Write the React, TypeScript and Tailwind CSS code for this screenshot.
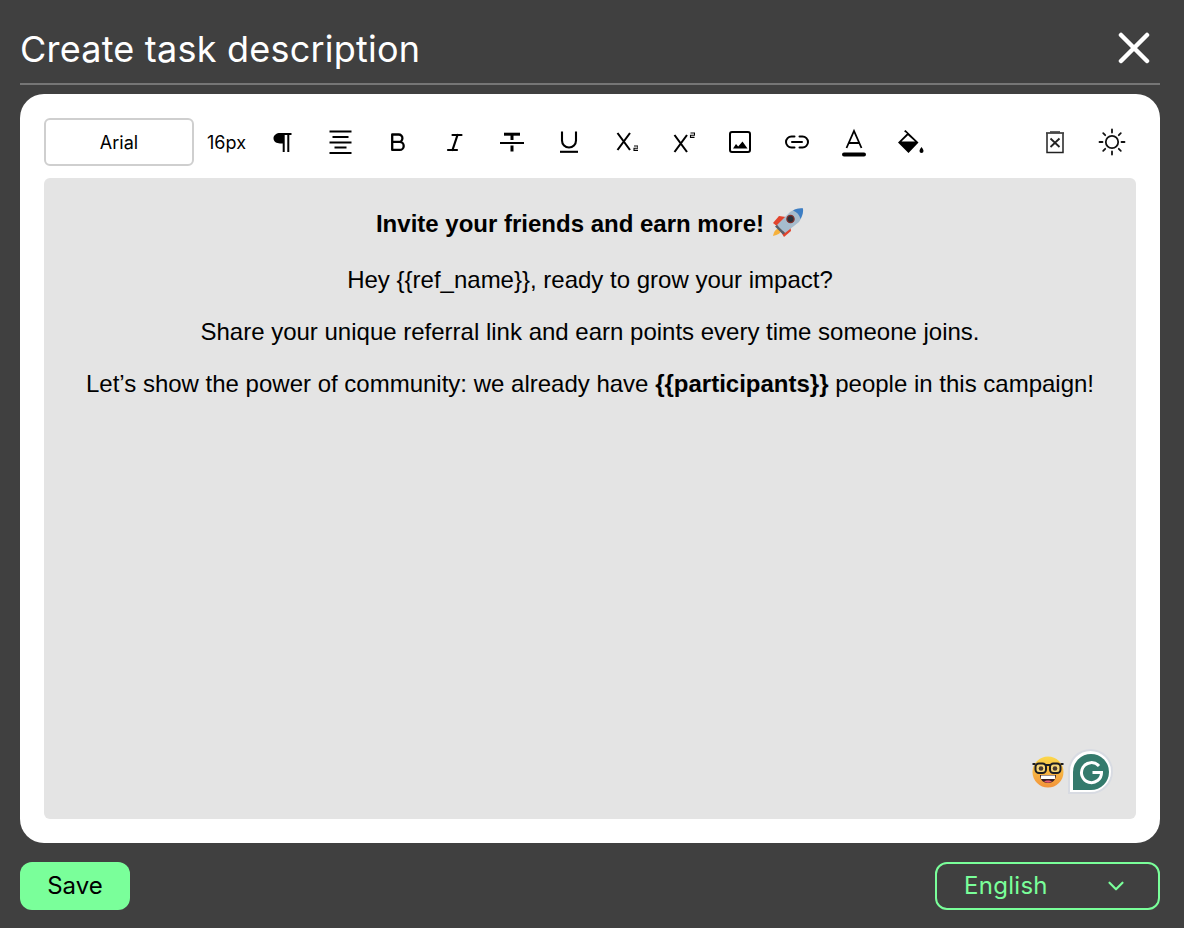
import { ChevronDown } from "lucide-react";

/* ── Toolbar icons ── */
const Cell = ({ children }: { children: React.ReactNode }) => (
  <div className="w-[57px] h-[48px] flex items-center justify-center shrink-0 text-black">{children}</div>
);

const IconPilcrow = () => (
  <svg width="24" height="24" viewBox="0 0 24 24" fill="currentColor">
    <path d="M8 13.500c-3.200 0-6.500-1.800-6.500-5.200C1.500 5 4.800 3 8 3h11.500v2h-2.200v17h-2V5h-2.600v17h-2V13.500z" />
  </svg>
);
const IconAlign = () => (
  <svg width="26" height="26" viewBox="0 0 26 26" fill="none" stroke="currentColor" strokeWidth="1.800">
    <path d="M1.500 2.500h22M4.500 8h16M1.500 13.500h22M6.500 18.500h12M1.500 24h22" />
  </svg>
);
const IconBold = () => (
  <svg width="24" height="24" viewBox="0 0 24 24" fill="none" stroke="currentColor" strokeWidth="2.300" strokeLinejoin="round">
    <path d="M6.200 4.500h6.500a3.700 3.700 0 0 1 0 7.400H6.200zM6.200 11.900h7.500a4 4 0 0 1 0 8H6.200z" />
  </svg>
);
const IconItalic = () => (
  <svg width="24" height="24" viewBox="0 0 24 24" fill="none" stroke="currentColor" strokeWidth="2.200" strokeLinecap="round">
    <path d="M9.500 5h9M5 20h9M14.500 5l-5 15" />
  </svg>
);
const IconStrike = () => (
  <svg width="26" height="26" viewBox="0 0 26 26" fill="none" stroke="currentColor">
    <path d="M5 5.200h16" strokeWidth="3" />
    <path d="M13 5v6" strokeWidth="3" />
    <path d="M1 14h24" strokeWidth="2" />
    <path d="M13 16.500v6" strokeWidth="3" />
  </svg>
);
const IconUnderline = () => (
  <svg width="24" height="24" viewBox="0 0 24 24" fill="none" stroke="currentColor" strokeWidth="2.100">
    <path d="M5 1.500v9a7 7 0 0 0 14 0v-9" />
    <path d="M3 21.800h18" />
  </svg>
);
const IconSub = () => (
  <svg width="24" height="24" viewBox="0 0 24 24" fill="none" stroke="currentColor">
    <path d="M3.500 3l12.500 17M16 3L3.500 20" strokeWidth="2.100" />
    <path d="M20 16h4v2.200h-4v2.200h4" strokeWidth="1.100" />
  </svg>
);
const IconSup = () => (
  <svg width="24" height="24" viewBox="0 0 24 24" fill="none" stroke="currentColor">
    <path d="M3.500 5l12.500 17M16 5L3.500 22" strokeWidth="2.100" />
    <path d="M19.500 3h4v2.200h-4v2.200h4" strokeWidth="1.100" />
  </svg>
);
const IconImage = () => (
  <svg width="24" height="24" viewBox="0 0 24 24" fill="none">
    <rect x="2" y="2" width="20" height="20" rx="2" stroke="currentColor" strokeWidth="2" />
    <path d="M5 18.500l3-4.500 2.200 2.500L14.500 11.500l5 7z" fill="currentColor" />
  </svg>
);
const IconLink = () => (
  <svg width="26" height="26" viewBox="0 0 26 26" fill="none" stroke="currentColor" strokeWidth="2" strokeLinecap="round">
    <path d="M10.500 7.500H7.500a5.500 5.500 0 0 0 0 11h3M15.500 7.500h3a5.500 5.500 0 0 1 0 11h-3M8 13h10" />
  </svg>
);
const IconTextColor = () => (
  <svg width="26" height="30" viewBox="0 0 26 30" fill="none">
    <path d="M5.500 21L13 4l7.500 17M7.800 16h10.400" stroke="currentColor" strokeWidth="1.800" />
    <rect x="1" y="25.500" width="24" height="4" rx="2" fill="currentColor" />
  </svg>
);
const IconFill = () => (
  <svg width="28" height="28" viewBox="0 0 28 28" fill="currentColor">
    <path d="M8.500 2L21.500 14.500 11.500 25 1 14.500 10 5.500 7 3.300z M11 7.300L4.500 13.500H18z" fillRule="evenodd" />
    <path d="M24.500 19c1.300 1.900 2 3 2 3.900a2 2 0 0 1-4 0c0-.9.700-2 2-3.900z" />
  </svg>
);
const IconClear = () => (
  <svg width="24" height="24" viewBox="0 0 24 24" fill="none" stroke="#222">
    <path d="M3 3h18" strokeWidth="1.500" />
    <path d="M7 1.800h10" strokeWidth="1" />
    <path d="M4 3.500V22.500h16V3.500" strokeWidth="1.500" />
    <path d="M7.500 8.500l9 8.500M16.500 8.500l-9 8.500" strokeWidth="1.800" />
  </svg>
);
const IconSun = () => (
  <svg width="28" height="28" viewBox="0 0 28 28" fill="none" stroke="#111" strokeWidth="1.800" strokeLinecap="round">
    <circle cx="14" cy="14" r="6.200" />
    <path d="M14 1.500v3M14 23.500v3M1.500 14h3M23.500 14h3M5.200 5.200l2 2M20.800 20.800l2 2M5.200 22.800l2-2M20.800 7.200l2-2" />
  </svg>
);

const Rocket = () => (
  <svg width="32" height="30" viewBox="0 0 32 30" className="inline-block align-[-6px] ml-[8px]">
    <path d="M1 15l6-7 7 1-8 10z" fill="#e2432c" />
    <path d="M12 29l7-6-1-7-9 8z" fill="#e2432c" />
    <path d="M7 20c-3 1-5 3-6 8 5-1 8-3 9-6z" fill="#f6b13c" />
    <path d="M5 17L18 4c4-3 9-4 13-3.500C31.500 5 30 10 27 14L13 25z" fill="#a6bccd" />
    <path d="M21 2.500c3-1.500 7-2.500 10-2 .5 3-.5 7-2.500 10.500-1-4-3.500-7-7.500-8.500z" fill="#3d7ec4" />
    <circle cx="18.500" cy="11" r="3.600" fill="#2a323c" stroke="#80302a" strokeWidth="1.300" />
    <path d="M5 17l8 8-2 1.500-8-8z" fill="#56606c" />
  </svg>
);

const Nerd = () => (
  <svg width="32" height="32" viewBox="0 0 32 32" className="shrink-0">
    <defs>
      <linearGradient id="nerdFace" x1="0" y1="0" x2="0" y2="1">
        <stop offset="0" stopColor="#fcd84a" />
        <stop offset="1" stopColor="#f2923a" />
      </linearGradient>
    </defs>
    <circle cx="16" cy="16" r="15.500" fill="url(#nerdFace)" />
    <rect x="3.500" y="7.500" width="10.500" height="9.500" rx="3.500" fill="#f8d878" stroke="#1d1d22" strokeWidth="2" />
    <rect x="18" y="7.500" width="10.500" height="9.500" rx="3.500" fill="#f8d878" stroke="#1d1d22" strokeWidth="2" />
    <path d="M0.500 8h3M14 9h4M28.500 8h3" stroke="#1d1d22" strokeWidth="2" />
    <circle cx="9" cy="12.500" r="2.300" fill="#4a3a30" />
    <circle cx="23" cy="12.500" r="2.300" fill="#4a3a30" />
    <path d="M8 19h16c0 5-3.500 8-8 8s-8-3-8-8z" fill="#3a1f24" />
    <rect x="9" y="19.500" width="14" height="3.500" fill="#fff" />
    <path d="M12 25.500c2-1.500 6-1.500 8 0-2 1.500-6 1.500-8 0z" fill="#e85a74" />
  </svg>
);

const Grammarly = () => (
  <div className="relative -mr-[1px] w-[45px] h-[45px] rounded-t-full rounded-br-full bg-white border-2 border-[#d8dbe2] flex items-center justify-center">
    <div className="w-[36px] h-[36px] rounded-t-full rounded-br-full bg-[#347a6c] flex items-center justify-center">
      <svg width="28" height="28" viewBox="0 0 28 28" fill="none" stroke="#fff" strokeWidth="3">
        <path d="M22 8a10 10 0 1 0 2.500 6.500H15.500" />
      </svg>
    </div>
  </div>
);

const tools = [
  <IconPilcrow />, <IconAlign />, <IconBold />, <IconItalic />, <IconStrike />, <IconUnderline />,
  <IconSub />, <IconSup />, <IconImage />, <IconLink />, <IconTextColor />, <IconFill />,
];

export default function App() {
  return (
    <div className="w-[1184px] h-[928px] bg-[#404040] px-[20px] pr-[24px] pt-[20px] flex flex-col overflow-hidden" style={{ fontFamily: "Inter, sans-serif" }}>
      <div className="h-[65px] border-b-2 border-[#767676] flex items-start justify-between">
        <h1 className="text-[36px] leading-[58px] tracking-[0.006em] text-white font-normal">Create task description</h1>
        <svg width="32" height="32" viewBox="0 0 32 32" fill="none" stroke="#fff" strokeWidth="4.500" strokeLinecap="round" className="mt-[12px] mr-[10px]">
          <path d="M3 3l26 26M29 3L3 29" />
        </svg>
      </div>

      <div className="mt-[9px] h-[749px] bg-white rounded-[24px] px-[24px] pt-[24px] pb-[24px] flex flex-col">
        <div className="flex items-center h-[48px]">
          <button className="w-[150px] h-[48px] mr-[4px] pt-[1px] rounded-[6px] border-2 border-[#cfcfcf] text-[18px] text-black flex items-center justify-center">
            Arial
          </button>
          <div className="w-[57px] text-center text-[18px] text-black">16px</div>
          {tools.map((icon, i) => (
            <Cell key={i}>{icon}</Cell>
          ))}
          <div className="ml-auto -mr-[4px] flex">
            <Cell><IconClear /></Cell>
            <Cell><IconSun /></Cell>
          </div>
        </div>

        <div className="relative mt-[12px] flex-1 bg-[#e4e4e4] rounded-[6px] pt-[26px] text-center text-black text-[24px] leading-[40px]" style={{ fontFamily: '"Liberation Sans", Arial, sans-serif' }}>
          <p className="font-bold">Invite your friends and earn more!<Rocket /></p>
          <p className="mt-[16px]">Hey {"{{ref_name}}"}, ready to grow your impact?</p>
          <p className="mt-[12px]">Share your unique referral link and earn points every time someone joins.</p>
          <p className="mt-[12px]">Let’s show the power of community: we already have <b>{"{{participants}}"}</b> people in this campaign!</p>
          <div className="absolute right-[24px] bottom-[25px] flex items-center gap-[4px]">
            <Nerd />
            <Grammarly />
          </div>
        </div>
      </div>

      <div className="mt-[19px] flex items-center justify-between">
        <button className="w-[110px] h-[48px] rounded-[12px] bg-[#7aff9a] text-[24px] text-black">Save</button>
        <div className="w-[225px] h-[48px] rounded-[12px] border-2 border-[#7aff9a] text-[#7aff9a] text-[24px] tracking-[0.012em] flex items-center justify-between pl-[27px] pr-[29px]">
          <span>English</span>
          <ChevronDown size={26} strokeWidth={2} />
        </div>
      </div>
    </div>
  );
}
